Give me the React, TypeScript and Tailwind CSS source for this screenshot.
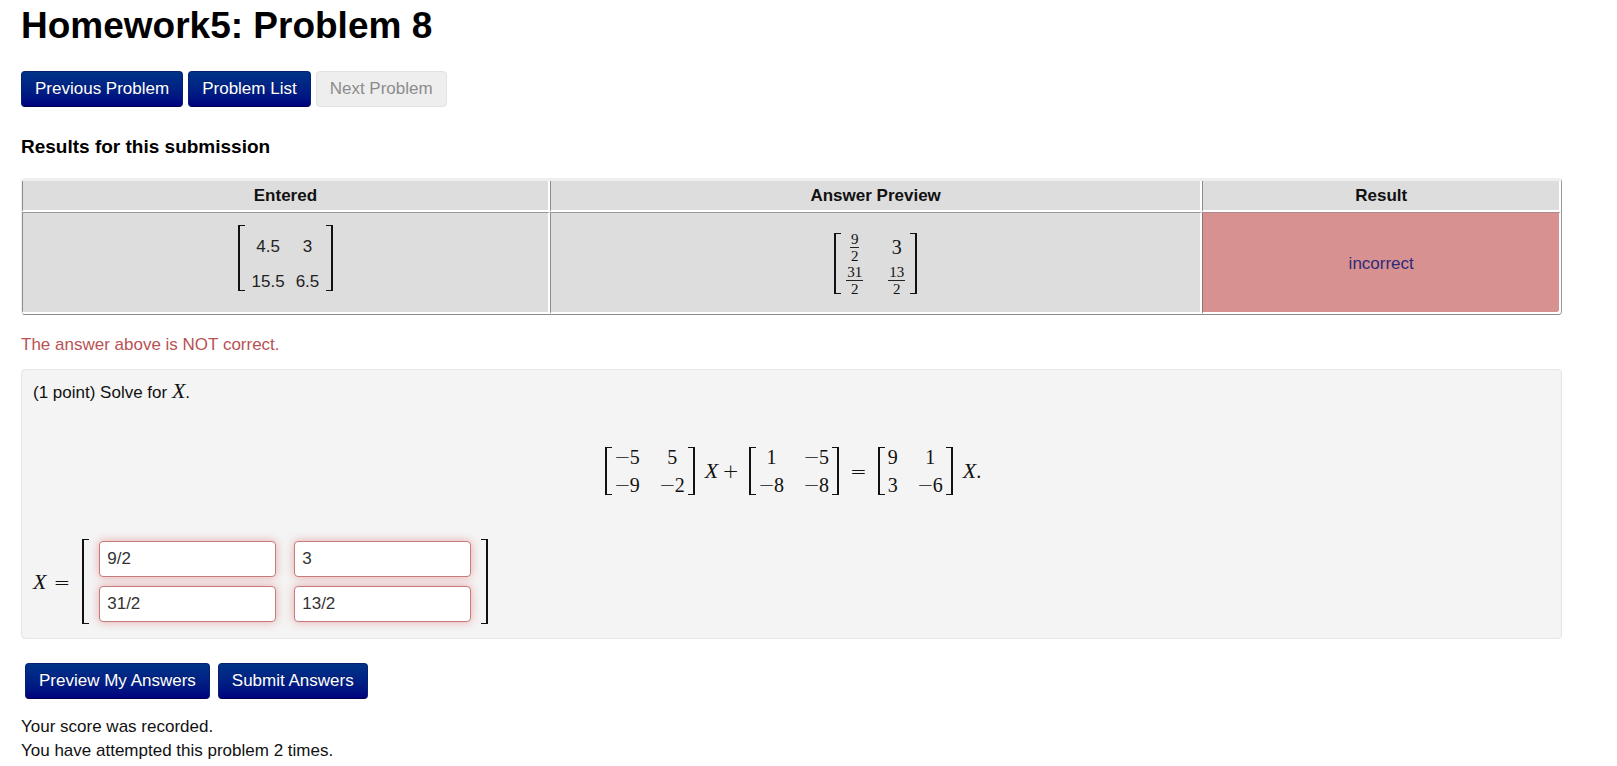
import clsx from 'clsx'
import { useState } from 'react'

const COEFFICIENTS = [
  ['-5', '5'],
  ['-9', '-2'],
]
const ADDED = [
  ['1', '-5'],
  ['-8', '-8'],
]
const RIGHT_SIDE = [
  ['9', '1'],
  ['3', '-6'],
]

const SERIF = "font-['Liberation_Serif',serif]"
const OPERATOR = "text-xl font-['DejaVu_Sans_Light','DejaVu_Sans',sans-serif] font-extralight"

function Bracket({ side }: { side: 'left' | 'right' }) {
  return (
    <span
      aria-hidden="true"
      className={clsx(
        'w-[7px] shrink-0 self-stretch border-y-1 border-[#111]',
        side === 'left' ? 'border-l-2' : 'border-r-2',
      )}
    />
  )
}

function Variable({ name }: { name: string }) {
  return <i className={clsx(SERIF, 'text-[22px] leading-6')}>{name}</i>
}

function Entry({ value }: { value: string }) {
  if (!value.startsWith('-')) return <span>{value}</span>
  return (
    <span className="inline-flex">
      <span className={clsx(OPERATOR, 'flex w-[15px] justify-center')}>−</span>
      {value.slice(1)}
    </span>
  )
}

function Matrix({ rows }: { rows: string[][] }) {
  return (
    <div className="flex h-12 items-center">
      <Bracket side="left" />
      <div className="grid grid-cols-[auto_auto] justify-items-center gap-x-5 px-[3px] leading-7">
        {rows.flat().map((value, i) => (
          <Entry key={i} value={value} />
        ))}
      </div>
      <Bracket side="right" />
    </div>
  )
}

function Fraction({ top, bottom }: { top: string; bottom: string }) {
  return (
    <span className="inline-flex flex-col items-center text-[15px] leading-4">
      <span className="border-b border-[#222] px-px">{top}</span>
      <span>{bottom}</span>
    </span>
  )
}

function Button({ children, disabled }: { children: string; disabled?: boolean }) {
  return (
    <button
      type="button"
      disabled={disabled}
      className={clsx(
        'h-9 rounded border px-[13px]',
        disabled
          ? 'border-[#e2e2e2] bg-[#eeeeee] text-[#8c8c8c]'
          : 'border-[#06216f] border-b-[#00004d] bg-linear-to-b from-[#003388] to-[#000080] text-white [text-shadow:0_-1px_0_rgba(0,0,0,0.25)]',
      )}
    >
      {children}
    </button>
  )
}

function ResultsTable() {
  return (
    <table className="mt-[19px] w-full table-fixed border-separate border-spacing-0 rounded border border-t-3 border-t-[#eeeeee] border-r-[#999] border-b-[#8c8c8c] border-l-[#eeeeee] text-center">
      <colgroup>
        <col className="w-[34.3%]" />
        <col className="w-[42.4%]" />
        <col className="w-[23.3%]" />
      </colgroup>
      <thead>
        <tr className="h-[31px]">
          {['Entered', 'Answer Preview', 'Result'].map((label) => (
            <th
              key={label}
              scope="col"
              className="border-r-2 border-b-2 border-l border-r-white border-b-white border-l-[#8c8c8c] bg-[#dddddd] leading-6 font-bold"
            >
              {label}
            </th>
          ))}
        </tr>
      </thead>
      <tbody>
        <tr className="h-[102px]">
          <td className="rounded-bl border-t border-r-2 border-b-2 border-l border-t-[#999] border-r-white border-b-white border-l-[#8c8c8c] bg-[#dddddd] pb-[10px]">
            <div className="inline-flex h-[66px] items-start align-middle">
              <Bracket side="left" />
              <div className="grid grid-cols-[auto_auto] justify-items-center gap-x-[11px] px-[7px] pt-1 leading-[35px] text-[#222]">
                <span>4.5</span>
                <span>3</span>
                <span>15.5</span>
                <span>6.5</span>
              </div>
              <Bracket side="right" />
            </div>
          </td>
          <td className="border-t border-r-2 border-b-2 border-l border-t-[#999] border-r-white border-b-white border-l-[#8c8c8c] bg-[#dddddd] pt-[2px]">
            <div className={clsx(SERIF, 'inline-flex h-[61px] items-center align-middle text-xl')}>
              <Bracket side="left" />
              <div className="grid grid-cols-[auto_auto] items-center justify-items-center gap-x-[25px] px-[5px]">
                <Fraction top="9" bottom="2" />
                <span className="leading-6">3</span>
                <Fraction top="31" bottom="2" />
                <Fraction top="13" bottom="2" />
              </div>
              <Bracket side="right" />
            </div>
          </td>
          <td className="rounded-br border-t border-r-2 border-b-2 border-l border-t-[#b08a8a] border-r-white border-b-white border-l-[#8c7474] bg-[#d69190] pt-[2px] text-[#2e2a78]">
            incorrect
          </td>
        </tr>
      </tbody>
    </table>
  )
}

export default function App() {
  const [answers, setAnswers] = useState(['9/2', '3', '31/2', '13/2'])

  const setAnswer = (index: number, value: string) => {
    setAnswers(answers.map((answer, i) => (i === index ? value : answer)))
  }

  return (
    <main className="bg-white pt-1 pr-[55px] pl-[21px] font-['Liberation_Sans',sans-serif] text-[17px] leading-6 text-[#111]">
      <h1 className="text-[37px] leading-[44px] font-bold text-black">Homework5: Problem 8</h1>

      <nav className="mt-[23px] flex gap-[5px]">
        <Button>Previous Problem</Button>
        <Button>Problem List</Button>
        <Button disabled>Next Problem</Button>
      </nav>

      <h2 className="mt-7 text-[19px] leading-6 font-bold text-black">Results for this submission</h2>
      <ResultsTable />

      <p className="mt-[18px] text-[#b85355]">The answer above is NOT correct.</p>

      <form onSubmit={(e) => e.preventDefault()}>
        <section className="mt-3 rounded border border-[#e5e5e5] bg-[#f4f4f4] px-[11px] pt-[9px] pb-[14px]">
          <p>
            (1 point) Solve for <Variable name="X" />.
          </p>

          <div className={clsx(SERIF, 'mt-[42px] flex items-center justify-center pl-[3px] text-xl')}>
            <Matrix rows={COEFFICIENTS} />
            <div className="flex items-baseline gap-1 pr-[10px] pl-[10px]">
              <Variable name="X" />
              <span className={OPERATOR}>+</span>
            </div>
            <Matrix rows={ADDED} />
            <span className={clsx(OPERATOR, 'px-[11px]')}>=</span>
            <Matrix rows={RIGHT_SIDE} />
            <div className="flex items-baseline pl-[10px]">
              <Variable name="X" />
              <span>.</span>
            </div>
          </div>

          {/* Answer blanks, row by row */}
          <div className="mt-11 flex items-center">
            <div className="flex items-baseline gap-[7px] pr-3">
              <Variable name="X" />
              <span className={OPERATOR}>=</span>
            </div>
            <div className="flex h-[85px] items-center">
              <Bracket side="left" />
              <div className="grid grid-cols-2 gap-x-[18px] gap-y-[9px] px-[10px]">
                {answers.map((answer, i) => (
                  <input
                    key={i}
                    type="text"
                    aria-label={`Row ${Math.floor(i / 2) + 1}, column ${(i % 2) + 1}`}
                    value={answer}
                    onChange={(e) => setAnswer(i, e.target.value)}
                    className="h-9 w-[177px] rounded border border-[#c77b7b] bg-white px-[7px] text-[#333] shadow-[0_0_10px_#e6a9a9]"
                  />
                ))}
              </div>
              <Bracket side="right" />
            </div>
          </div>
        </section>

        <div className="mt-6 flex gap-2 pl-1">
          <Button>Preview My Answers</Button>
          <Button>Submit Answers</Button>
        </div>
      </form>

      <div className="mt-4">
        <p>Your score was recorded.</p>
        <p>You have attempted this problem 2 times.</p>
      </div>
    </main>
  )
}
